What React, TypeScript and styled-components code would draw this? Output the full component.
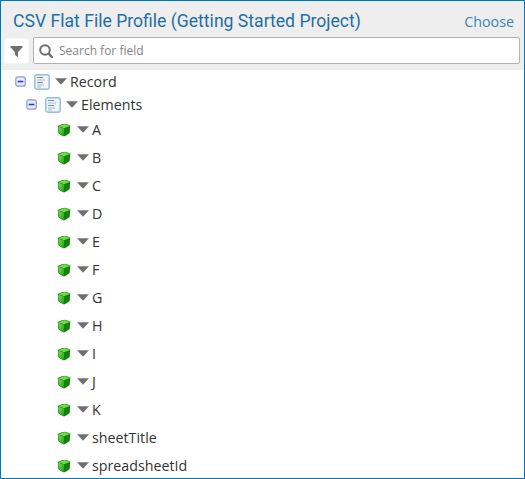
import React from "react";
import styled, { createGlobalStyle } from "styled-components";

const GlobalStyle = createGlobalStyle`
  * { box-sizing: border-box; }
  body { margin: 0; background: #fff; }
`;

const Panel = styled.div`
  width: 525px;
  height: 479px;
  overflow: hidden;
  border: 1px solid #0079b8;
  background: #fff;
  color: #333;
  font-family: "Open Sans", "Noto Sans", sans-serif;
  font-size: 14.25px;
`;

const Header = styled.header`
  height: 69px;
  background: #eee;
`;

const TitleBar = styled.div`
  display: flex;
  align-items: center;
  justify-content: space-between;
  height: 36px;
  padding: 4px 10px 0 12px;
`;

const Title = styled.h1`
  margin: 0;
  color: #1f6fa5;
  font: 400 17.6px/24px Roboto, sans-serif;
  white-space: nowrap;
`;

const Choose = styled.a`
  color: #3b85b5;
  font-size: 14.3px;
  line-height: 20px;
  padding-top: 1px;
`;

const SearchBar = styled.div`
  display: flex;
  gap: 4px;
  padding: 0 4px 0 3px;
`;

const FilterButton = styled.button`
  display: flex;
  align-items: center;
  justify-content: center;
  width: 25px;
  height: 26px;
  margin-top: 1px;
  padding: 0;
  border: 1px solid #f7f7f7;
  border-radius: 3px;
  background: #fff;
`;

const SearchBox = styled.label`
  display: flex;
  flex: 1;
  align-items: center;
  gap: 6px;
  height: 27px;
  padding-left: 5px;
  border: 1px solid #b2b2b2;
  border-radius: 2px;
  background: #fff;
`;

const SearchInput = styled.input`
  flex: 1;
  padding: 0;
  border: 0;
  outline: 0;
  background: none;
  font: 12px/18px "Open Sans", "Noto Sans", sans-serif;
  &::placeholder { color: #858585; opacity: 1; }
`;

const Tree = styled.div`
  padding-top: 0;
`;

const Row = styled.div<{ $indent: number; $height: number }>`
  display: flex;
  align-items: center;
  height: ${(p) => p.$height}px;
  padding-left: ${(p) => p.$indent}px;
  white-space: nowrap;
`;

const Label = styled.span`
  margin-left: 3px;
  line-height: 20px;
`;

const Toggle = styled.svg`
  flex: none;
  width: 11px;
  height: 11px;
  margin-right: 8px;
`;

const RecordSvg = styled.svg`
  flex: none;
  width: 16px;
  height: 16px;
  margin-right: 5px;
`;

const CubeSvg = styled.svg`
  flex: none;
  width: 14px;
  height: 14px;
  margin-right: 6px;
`;

const Caret = styled.svg`
  flex: none;
  width: 12px;
  height: 7px;
  margin-bottom: 1px;
`;

const FunnelIcon = () => (
  <svg width="13" height="13" viewBox="0 0 13 13">
    <path d="M.5 1h12v1.3L8 7.2v5L5 10V7.2L.5 2.3z" fill="#707070" />
  </svg>
);

const SearchIcon = () => (
  <svg width="14" height="14" viewBox="0 0 14 14" fill="none" stroke="#6e6e6e">
    <circle cx="6" cy="6" r="4.8" strokeWidth="2" />
    <path d="M9.6 9.6l3.4 3.4" strokeWidth="2.3" strokeLinecap="round" />
  </svg>
);

const ToggleIcon = () => (
  <Toggle viewBox="0 0 11 11">
    <rect x=".8" y=".8" width="9.4" height="9.4" rx="2" fill="#e9edfb" stroke="#8d9acb" strokeWidth="1.2" />
    <path d="M2.7 5.5h5.6" stroke="#3434d4" strokeWidth="1.6" />
  </Toggle>
);

const RecordIcon = () => (
  <RecordSvg viewBox="0 0 16 16">
    <rect x=".8" y=".8" width="14.4" height="14.4" rx="2" fill="#e0edfc" stroke="#9db9e6" strokeWidth="1.4" />
    <rect x="2" y="2" width="12" height="12" fill="#f1f6fc" />
    <path d="M3 3.5h6M3 8.5h6" stroke="#788b9e" strokeWidth="1.2" />
    <path d="M3 6h8M3 11h7M3 13h4" stroke="#a9b8c7" />
  </RecordSvg>
);

const CubeIcon = () => (
  <CubeSvg viewBox="0 0 14 14">
    <defs>
      <linearGradient id="cubeLeft" x1="0" y1="0" x2="1" y2="1">
        <stop offset="0" stopColor="#7be052" />
        <stop offset="1" stopColor="#229d13" />
      </linearGradient>
    </defs>
    <path d="M.8 3.1Q4 1.3 7.5 .8Q10.8 1.4 13.2 2.8L12.8 9.8Q10.5 12.2 7 13.4Q3.5 12.3 1.3 10z" fill="#16800f" />
    <path d="M1.3 3.2L7.5 1l5.3 2L7 5.2z" fill="#72d848" />
    <path d="M1.2 3.8L7 5.7v7.2L2 10z" fill="url(#cubeLeft)" />
  </CubeSvg>
);

const CaretIcon = () => (
  <Caret viewBox="0 0 12 7">
    <path d="M0 .3h12L6 6.8z" fill="#707070" />
  </Caret>
);

const fields = ["A", "B", "C", "D", "E", "F", "G", "H", "I", "J", "K", "sheetTitle", "spreadsheetId"];

export default function App() {
  return (
    <>
      <GlobalStyle />
      <Panel>
        <Header>
          <TitleBar>
            <Title>CSV Flat File Profile (Getting Started Project)</Title>
            <Choose>Choose</Choose>
          </TitleBar>
          <SearchBar>
            <FilterButton aria-label="Filter"><FunnelIcon /></FilterButton>
            <SearchBox>
              <SearchIcon />
              <SearchInput placeholder="Search for field" />
            </SearchBox>
          </SearchBar>
        </Header>
        <Tree>
          <Row $indent={14} $height={23}>
            <ToggleIcon /><RecordIcon /><CaretIcon /><Label>Record</Label>
          </Row>
          <Row $indent={25} $height={23}>
            <ToggleIcon /><RecordIcon /><CaretIcon /><Label>Elements</Label>
          </Row>
          {fields.map((name) => (
            <Row key={name} $indent={56} $height={28}>
              <CubeIcon /><CaretIcon /><Label>{name}</Label>
            </Row>
          ))}
        </Tree>
      </Panel>
    </>
  );
}
